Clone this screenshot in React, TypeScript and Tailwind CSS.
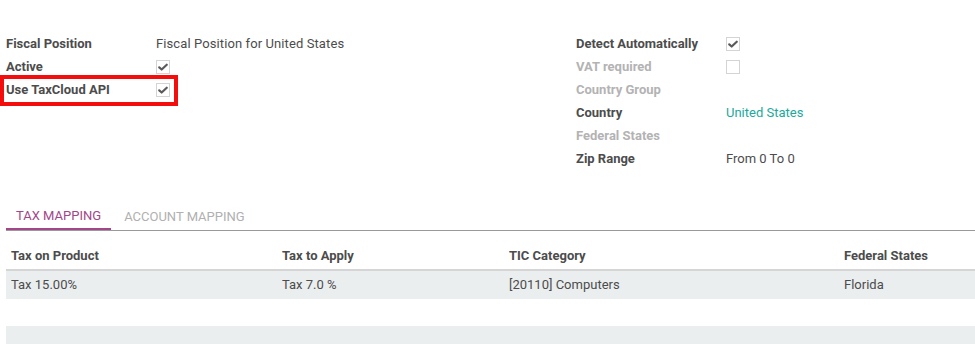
import React from "react";

function Check({ checked }: { checked: boolean }) {
    return (
        <span className="inline-flex w-[14px] h-[14px] border border-[#d4d4d4] bg-white items-center justify-center">
            {checked && (
                <svg viewBox="0 0 12 12" className="w-[10px] h-[10px]">
                    <path d="M1.5 6.4 L4.4 9 L10.5 3.2" fill="none" stroke="#5a5a5a" strokeWidth="2.6" strokeLinecap="round" strokeLinejoin="round" />
                </svg>
            )}
        </span>
    );
}

function Row({ label, muted, children }: { label: string; muted?: boolean; children?: React.ReactNode }) {
    return (
        <div className="flex items-center h-[23px]">
            <span className={`w-[150px] font-bold ${muted ? "text-[#b3b3b3]" : "text-[#4c4c4c]"}`}>{label}</span>
            <span className="flex items-center">{children}</span>
        </div>
    );
}

export default function App() {
    return (
        <div className="w-[975px] h-[344px] bg-white overflow-hidden text-[13px] text-[#4c4c4c]" style={{ fontFamily: "Roboto, 'Liberation Sans', sans-serif" }}>
            <div className="flex pt-[32px] pl-[6px]">
                <div className="w-[570px] flex flex-col">
                    <Row label="Fiscal Position"><span className="tracking-[0.1px]">Fiscal Position for United States</span></Row>
                    <Row label="Active"><Check checked /></Row>
                    <div className="relative">
                        <div className="absolute left-[-6px] top-[-3px] w-[178px] h-[31px] border-[4px] border-[#f30d0d]" />
                        <Row label="Use TaxCloud API"><Check checked /></Row>
                    </div>
                </div>
                <div className="flex flex-col">
                    <Row label="Detect Automatically"><Check checked /></Row>
                    <Row label="VAT required" muted><Check checked={false} /></Row>
                    <Row label="Country Group" muted />
                    <Row label="Country"><span className="text-[#21a89c]">United States</span></Row>
                    <Row label="Federal States" muted />
                    <Row label="Zip Range">From 0 To 0</Row>
                </div>
            </div>

            <div className="mt-[33px] ml-[6px]">
                <div className="flex border-b border-[#999]">
                    <div className="px-[10px] h-[27px] flex items-center border-b-2 border-[#a24689] -mb-px text-[#a24689] uppercase">Tax Mapping</div>
                    <div className="ml-[3px] px-[10px] h-[27px] flex items-center text-[#b0b0b0] uppercase">Account Mapping</div>
                </div>

                <div className="mt-[12px]">
                    <div className="grid grid-cols-[276px_227px_335px_1fr] h-[28px] items-center font-bold border-b-2 border-[#d5d5d5]">
                        <span className="pl-[5px]">Tax on Product</span>
                        <span>Tax to Apply</span>
                        <span>TIC Category</span>
                        <span>Federal States</span>
                    </div>
                    <div className="grid grid-cols-[276px_227px_335px_1fr] h-[28px] items-center bg-[#ebeeef]">
                        <span className="pl-[5px]">Tax 15.00%</span>
                        <span>Tax 7.0 %</span>
                        <span>[20110] Computers</span>
                        <span>Florida</span>
                    </div>
                    <div className="h-[27px] bg-white" />
                    <div className="h-[28px] bg-[#ebeeef]" />
                </div>
            </div>
        </div>
    );
}
